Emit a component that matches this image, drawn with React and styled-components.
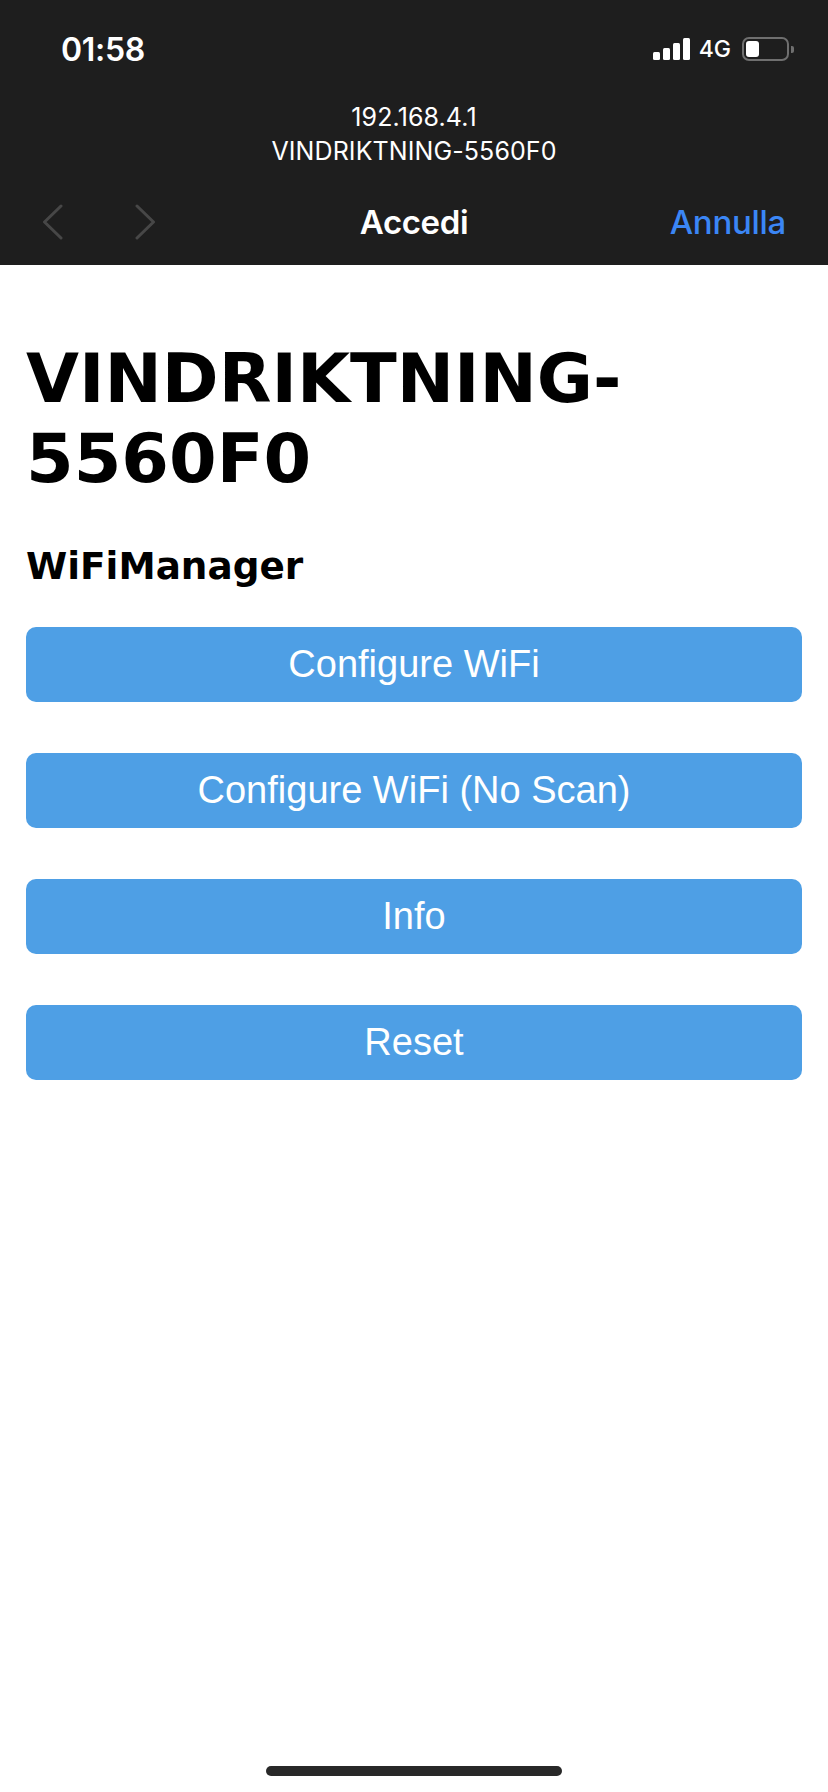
import React from "react";
import styled, { createGlobalStyle } from "styled-components";

const GlobalStyle = createGlobalStyle`
  html, body {
    margin: 0;
    padding: 0;
    background: #ffffff;
  }
  #root {
    min-height: 100vh;
  }
`;

const Page = styled.div`
  display: flex;
  flex-direction: column;
  min-height: 100vh;
  background: #ffffff;
`;

const Header = styled.header`
  background: #1e1e1e;
  height: 265px;
  display: flex;
  flex-direction: column;
  font-family: Inter, "Noto Sans", sans-serif;
  color: #ffffff;
`;

const StatusBar = styled.div`
  height: 98px;
  display: flex;
  align-items: center;
  justify-content: space-between;
  padding: 0 34px 0 61px;
`;

const Clock = styled.span`
  font-size: 32px;
  font-weight: 600;
  letter-spacing: -0.3px;
`;

const StatusIcons = styled.div`
  display: flex;
  align-items: center;
  gap: 9px;
`;

const Signal = styled.div`
  display: flex;
  align-items: flex-end;
  gap: 3px;
  height: 22px;
`;

const Bar = styled.span`
  width: 7px;
  height: ${(p) => p.$h}px;
  background: #ffffff;
  border-radius: 1.5px;
`;

const Network = styled.span`
  font-size: 23px;
  font-weight: 500;
  margin-right: 2px;
`;

const Battery = styled.div`
  display: flex;
  align-items: center;
  gap: 2px;
`;

const BatteryBody = styled.div`
  box-sizing: border-box;
  width: 47px;
  height: 24px;
  border: 2px solid #6f6f6f;
  border-radius: 7px;
  padding: 2px;
  display: flex;
`;

const BatteryLevel = styled.span`
  width: 13px;
  background: #ffffff;
  border-radius: 3px;
`;

const BatteryNub = styled.span`
  width: 3px;
  height: 7px;
  background: #6f6f6f;
  border-radius: 0 2px 2px 0;
`;

const Address = styled.div`
  display: flex;
  flex-direction: column;
  align-items: center;
  font-size: 25px;
  line-height: 34px;
  margin-top: 2px;
  letter-spacing: 0.1px;
`;

const NavBar = styled.nav`
  flex: 1;
  display: grid;
  grid-template-columns: 1fr auto 1fr;
  align-items: center;
  padding: 10px 42px 0 42px;
`;

const Arrows = styled.div`
  display: flex;
  align-items: center;
  gap: 72px;
`;

const NavTitle = styled.span`
  font-size: 33px;
  font-weight: 600;
  letter-spacing: -0.4px;
`;

const Cancel = styled.span`
  justify-self: end;
  font-size: 33px;
  font-weight: 500;
  color: #3b86f5;
  letter-spacing: -0.3px;
`;

const Content = styled.main`
  padding: 73px 26px 0 26px;
  font-family: "DejaVu Sans", Verdana, sans-serif;
  color: #000000;
`;

const Title = styled.h1`
  margin: 0;
  font-size: 68.5px;
  line-height: 80px;
  font-weight: bold;
`;

const Subtitle = styled.h3`
  margin: 46px 0 0 0;
  font-size: 37.4px;
  line-height: 44px;
  font-weight: bold;
`;

const Menu = styled.div`
  display: flex;
  flex-direction: column;
  gap: 51px;
  margin-top: 39px;
`;

const MenuButton = styled.button`
  height: 75px;
  width: 100%;
  border: none;
  border-radius: 10px;
  background: #4e9fe5;
  color: #ffffff;
  font-family: "Liberation Sans", Arial, sans-serif;
  font-size: 38px;
  padding: 0;
  cursor: pointer;
`;

const HomeIndicator = styled.div`
  margin: auto auto 16px auto;
  width: 296px;
  height: 10px;
  border-radius: 5px;
  background: #282828;
`;

const Chevron = ({ dir }) => (
  <svg width="21" height="36" viewBox="0 0 21 36" fill="none">
    <path
      d={dir === "left" ? "M19 2 L2.5 18 L19 34" : "M2 2 L18.5 18 L2 34"}
      stroke="#474747"
      strokeWidth="3"
      strokeLinecap="round"
      strokeLinejoin="round"
    />
  </svg>
);

const buttons = ["Configure WiFi", "Configure WiFi (No Scan)", "Info", "Reset"];

export default function App() {
  return (
    <Page>
      <GlobalStyle />
      <Header>
        <StatusBar>
          <Clock>01:58</Clock>
          <StatusIcons>
            <Signal>
              <Bar $h={8} />
              <Bar $h={12} />
              <Bar $h={17} />
              <Bar $h={22} />
            </Signal>
            <Network>4G</Network>
            <Battery>
              <BatteryBody>
                <BatteryLevel />
              </BatteryBody>
              <BatteryNub />
            </Battery>
          </StatusIcons>
        </StatusBar>
        <Address>
          <span>192.168.4.1</span>
          <span>VINDRIKTNING-5560F0</span>
        </Address>
        <NavBar>
          <Arrows>
            <Chevron dir="left" />
            <Chevron dir="right" />
          </Arrows>
          <NavTitle>Accedi</NavTitle>
          <Cancel>Annulla</Cancel>
        </NavBar>
      </Header>
      <Content>
        <Title>
          VINDRIKTNING-
          <br />
          5560F0
        </Title>
        <Subtitle>WiFiManager</Subtitle>
        <Menu>
          {buttons.map((label) => (
            <MenuButton key={label}>{label}</MenuButton>
          ))}
        </Menu>
      </Content>
      <HomeIndicator />
    </Page>
  );
}
